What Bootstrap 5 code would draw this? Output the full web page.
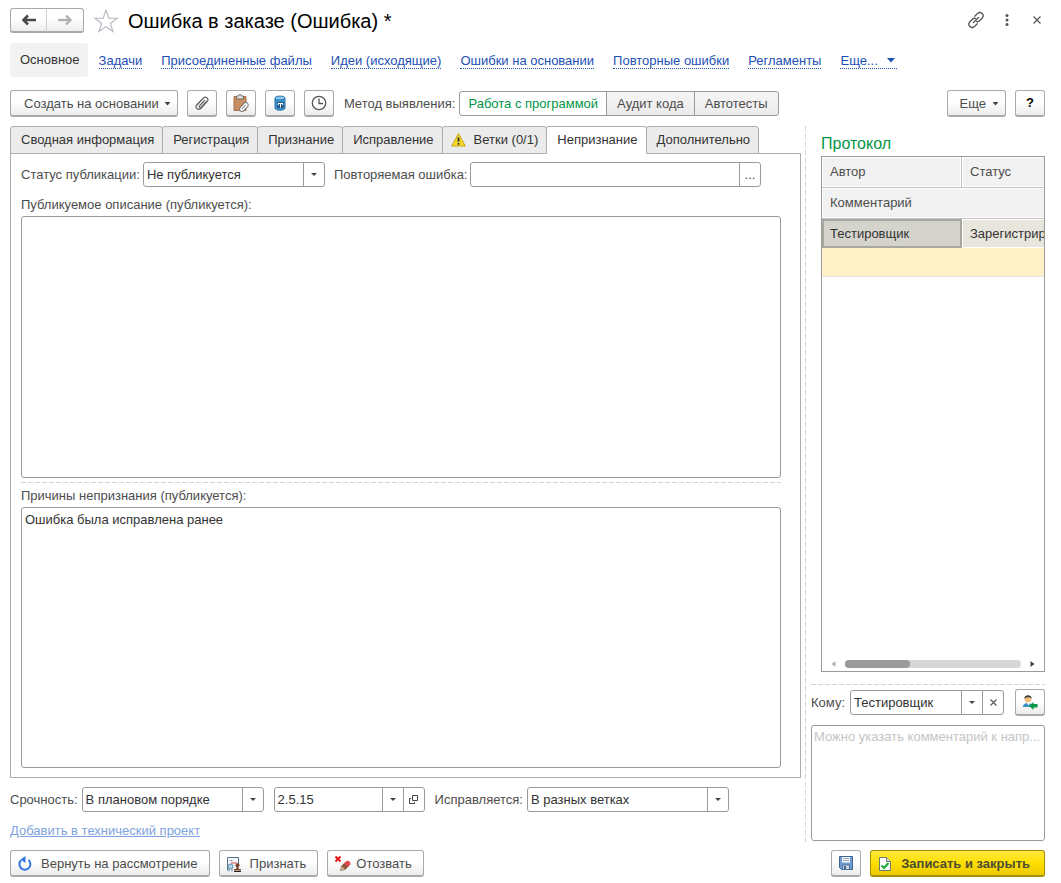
<!DOCTYPE html>
<html lang="ru">
<head>
<meta charset="utf-8">
<meta name="viewport" content="width=device-width, initial-scale=1">
<title>Ошибка в заказе (Ошибка) *</title>
<link href="https://cdn.jsdelivr.net/npm/bootstrap@5.3.0/dist/css/bootstrap.min.css" rel="stylesheet">
<style>
  body { font-family: "Liberation Sans", Arial, sans-serif; font-size: 13px; line-height: 16px; color: #4d4d4d; background: #fff; }
  .page { padding: 8px 16px 6px 10px; }
  svg { display: block; flex: none; }

  /* buttons */
  .btn-app { --bs-btn-font-size: 13px; --bs-btn-line-height: 16px; --bs-btn-color: #4d4d4d; --bs-btn-border-color: #a9a9a9;
    --bs-btn-border-radius: 3px; --bs-btn-hover-color: #333; --bs-btn-hover-border-color: #888;
    height: 27px; padding: 1px 6px 0; display: inline-flex; align-items: center; justify-content: center; white-space: nowrap;
    background: linear-gradient(#fff 45%, #ececec); border-bottom: 2px solid #a9a9a9; }
  .btn-square { width: 30px; padding: 0; }
  .btn-main { --bs-btn-color: #4d4d33; --bs-btn-border-color: #a58e00; background: linear-gradient(#ffe940, #ffdf00 50%, #ecc900);
    border-bottom-color: #a58e00; font-weight: 700; padding-right: 14px; }
  .btn-nav { width: 37px; height: 25px; padding: 0; }
  .btn-nav + .btn-nav { width: 38px; border-left-color: #d0d0d0; }
  .bare { border: 0; background: none; padding: 0; display: inline-flex; align-items: center; justify-content: center; color: #555; }

  h1.title { font-size: 20px; line-height: 24px; color: #000; font-weight: 400; }
  .window-tools { gap: 16px; margin-bottom: 2px; }

  /* section links */
  .sections { height: 34px; margin-top: 10px; }
  .sections .current { background: #f2f2f2; border-radius: 3px; padding: 9px 8px 9px 10px; color: #333; margin-right: 11px; text-decoration: none; }
  .sections .go { color: #1d50b4; text-decoration: none; border-bottom: 1px dotted #1d50b4; line-height: 14px; margin-right: 19px; margin-top: 2px; white-space: nowrap; }

  /* toolbar */
  .toolbar { margin: 13px 0 9px; }
  .toolbar .tool { margin-left: 9px; }
  .toolbar .create { padding-left: 13px; gap: 5px; }
  .toolbar .more { padding-left: 12px; gap: 6px; }
  .toolbar .method { margin: 0 4px 0 10px; }
  .seg .btn-app { height: 25px; border: 1px solid #9a9a9a; background: linear-gradient(#f6f6f6, #ebebeb); padding: 0 10px; }
  .seg .btn-check:checked + .btn-app { background: #fff; color: #009646; border-color: #9a9a9a; padding: 0 8px; }

  /* tabs */
  .apptabs { border: 0; position: relative; z-index: 1; flex-wrap: nowrap; }
  .apptabs .nav-link { padding: 5px 8px 5px 10px; height: 28px; line-height: 16px; color: #333; background: #ebebeb; border: 1px solid #adadad;
    border-radius: 3px 3px 0 0; margin: 0 -1px -1px 0; white-space: nowrap; }
  .apptabs .nav-link.active { background: #fff; border-color: #adadad #adadad #fff; color: #333; }
  .tabpanel { border: 1px solid #adadad; padding: 8px 19px 9px 10px; }

  /* fields */
  .form-control, .form-select { font-size: 13px; line-height: 17px; color: #333; border: 1px solid #9a9a9a; border-radius: 3px; padding: 3px; }
  input.form-control, .form-select { height: 25px; min-height: 25px; }
  .form-select { background: #fff url("data:image/svg+xml,%3Csvg xmlns='http://www.w3.org/2000/svg' width='21' height='23'%3E%3Cpath d='M.5 0v23' stroke='%239a9a9a'/%3E%3Cpath d='M8 10h6l-3 3z' fill='%23444'/%3E%3C/svg%3E") no-repeat right 0 top 0 / 21px 23px; padding-right: 24px; }
  .input-group { flex-wrap: nowrap; }
  .input-group .side { width: 22px; height: 25px; padding: 0; border: 1px solid #9a9a9a; border-radius: 0 3px 3px 0; margin-left: -1px; background: #fff; color: #444;
    display: flex; align-items: center; justify-content: center; }
  .input-group .side:not(:last-child) { border-radius: 0; }
  textarea.form-control { resize: none; line-height: 16px; min-height: 60px; padding-top: 4px; }
  textarea.note { height: 116px; margin: 9px 0; padding: 3px 2px; white-space: pre; overflow: hidden; }
  textarea.note::placeholder { color: #c4c4c4; }
  .w-list { width: 182px; }
  .w-ver { width: 151px; }
  .w-branch { width: 202px; }
  .first-row { gap: 3px; }
  .low-row { gap: 4px; margin-top: 9px; }
  .to-row { gap: 5px; margin-top: 4px; }
  .apart { margin-left: 6px; }
  .repeat { margin-right: 20px; }
  .cap { margin: 10px 0 3px; }
  .cap2 { margin: 5px 0 3px; }
  .add-row { margin: 11px 0; }
  .add-link { color: #7da3e0; }

  /* dashed splitters */
  .split-h { height: 1px; background: repeating-linear-gradient(90deg, #d4d4d4 0 5px, transparent 5px 7px); }
  .split-v { width: 1px; background: repeating-linear-gradient(#d4d4d4 0 5px, transparent 5px 8px); }

  /* side pane */
  .side-pane { width: 234px; margin-left: 5px; }
  .side-pane h2 { font-size: 16px; line-height: 20px; color: #009646; font-weight: 400; margin: 8px 0 2px 10px; }
  .side-pane .split-h { margin-top: 12px; }
  .log { border: 1px solid #9a9a9a; overflow: hidden; margin-left: 10px; }
  .log table { border-collapse: separate; border-spacing: 0; table-layout: fixed; width: 590px; }
  .log .col-author { width: 140px; }
  .log th { height: 31px; background: #f2f2f2; font-weight: 400; padding: 0 8px; border-bottom: 1px solid #c4c4c4; box-shadow: inset 0 0 0 1px #fff; }
  .log th.first { border-right: 1px solid #c4c4c4; }
  .log td { height: 29px; padding: 0 8px; color: #333; background: #e8e6dc; box-shadow: inset 0 0 0 1px #fff; }
  .log td.sel { background: #d5d4cc; border: 2px solid #a8a7a0; padding: 0 6px; box-shadow: none; }
  .log td.msg { background: #fff2c8; border-bottom: 1px solid #e2e2e2; box-shadow: none; }
  .hbar { height: 15px; padding: 0 9px; gap: 9px; }
  .hbar .track { height: 8px; border-radius: 4px; background: #d6d6d6; }
  .hbar .thumb { width: 37%; height: 8px; border-radius: 4px; background: #9a9a9a; }

  /* footer */
  .actions { gap: 9px; }
  .actions .wide { padding-right: 11px; }
</style>
</head>
<body>
<div class="page d-flex flex-column min-vh-100">

  <header class="d-flex align-items-center">
    <div class="btn-group">
      <button class="btn btn-app btn-nav" type="button" aria-label="Назад"><svg width="16" height="12" viewBox="0 0 16 12"><path d="M15 6H3M7 1.500L2.500 6 7 10.500" fill="none" stroke="#4a4a4a" stroke-width="2.600"/></svg></button>
      <button class="btn btn-app btn-nav" type="button" aria-label="Вперед"><svg width="16" height="12" viewBox="0 0 16 12"><path d="M1 6h12M9 1.500L13.500 6 9 10.500" fill="none" stroke="#b0b0b0" stroke-width="2.400"/></svg></button>
    </div>
    <button class="bare mx-2" type="button" aria-label="В избранное"><svg width="28" height="24" viewBox="0 0 28 24"><path d="M14 1l2.800 8.300H25.200l-6.800 5.200 2.600 8L14 17.600l-7 4.900 2.600-8L2.800 9.300h8.400z" fill="#fff" stroke="#b3b8bf" stroke-width="1.100"/></svg></button>
    <h1 class="title m-0 flex-fill">Ошибка в заказе (Ошибка) *</h1>
    <div class="window-tools d-flex align-items-center">
      <button class="bare" type="button" aria-label="Ссылка"><svg width="18" height="18" viewBox="0 0 18 18"><g fill="none" stroke="#555" stroke-width="1.300" stroke-linecap="round"><path d="M7.800 5.200l2.700-2.700q2.400-2 4.600 0t.2 4.500l-2.700 2.800q-1.600 1.400-3.300.7"/><path d="M10.200 12.800l-2.700 2.700q-2.400 2-4.600 0t-.2-4.500l2.700-2.800q1.600-1.400 3.300-.7"/><path d="M6.500 11.500l5-5"/></g></svg></button>
      <button class="bare" type="button" aria-label="Меню"><svg width="12" height="14" viewBox="0 0 12 14"><g fill="#555"><circle cx="6" cy="2.500" r="1.500"/><circle cx="6" cy="7" r="1.500"/><circle cx="6" cy="11.500" r="1.500"/></g></svg></button>
      <button class="bare" type="button" aria-label="Закрыть"><svg width="16" height="14" viewBox="0 0 16 14"><path d="M4.500 3.500l7 7M11.500 3.500l-7 7" stroke="#555" stroke-width="1.200"/></svg></button>
    </div>
  </header>

  <nav class="sections d-flex align-items-center">
    <a class="current" href="#">Основное</a>
    <a class="go" href="#">Задачи</a>
    <a class="go" href="#">Присоединенные файлы</a>
    <a class="go" href="#">Идеи (исходящие)</a>
    <a class="go" href="#">Ошибки на основании</a>
    <a class="go" href="#">Повторные ошибки</a>
    <a class="go" href="#">Регламенты</a>
    <a class="go d-flex align-items-center gap-2" href="#">Еще... <svg width="11" height="5" viewBox="0 0 11 5"><path d="M1 0h8l-4 4.500z" fill="#1d50b4"/></svg></a>
  </nav>

  <div class="toolbar d-flex align-items-center">
    <button class="btn btn-app create" type="button">Создать на основании<svg width="7" height="4" viewBox="0 0 7 4"><path d="M.5 0h6l-3 3.500z" fill="#444"/></svg></button>
    <button class="btn btn-app btn-square tool" type="button" aria-label="Файлы"><svg width="16" height="16" viewBox="0 0 16 16"><g fill="none" stroke="#666" stroke-width="1.200" stroke-linecap="round"><path d="M3 10l6.500-7a2.500 2.500 0 0 1 3.700 3.400l-6.400 7a2.700 2.700 0 0 1-4-3.700L8.500 4"/><path d="M13 6.500l-6 6.500M10.500 5.500l-5 5.500a1 1 0 0 0 1.600 1.300L12 7"/></g></svg></button>
    <button class="btn btn-app btn-square tool" type="button" aria-label="Вставить"><svg width="18" height="18" viewBox="0 0 18 18"><path d="M2 2.500h12v14H2z" fill="#c78e62" stroke="#a87048"/><path d="M4.500 3.500V2h2a1.500 1.500 0 0 1 3 0h2v3h-7z" fill="#ddd" stroke="#6c6258" stroke-width=".9"/><g fill="#fff" stroke="#777" stroke-width="1.100"><path d="M8.200 13.500l3.700-4.100a2.400 2.400 0 0 1 3.700 3.200L11.900 16.600a2.200 2.200 0 0 1-3.700-3.100z"/><path d="M10 15l3.500-4"/></g></svg></button>
    <button class="btn btn-app btn-square tool" type="button" aria-label="База"><svg width="14" height="16" viewBox="0 0 14 16"><path d="M2 3v10c0 3 10 3 10 0V3z" fill="#3d91cb" stroke="#2877b0"/><ellipse cx="7" cy="3" rx="5" ry="2" fill="#8cc8ee" stroke="#2877b0"/><rect x="4" y="7" width="7" height="6" rx="1" fill="#275780"/><path d="M5 8.500h5M7.500 8.500v4M5.200 8.500v1.700M9.800 8.500v1.700" stroke="#fff" stroke-width="1"/></svg></button>
    <button class="btn btn-app btn-square tool" type="button" aria-label="История"><svg width="16" height="16" viewBox="0 0 16 16"><circle cx="8" cy="8" r="6.700" fill="#fff" stroke="#555" stroke-width="1.300"/><path d="M8 3.500V8.500h4" fill="none" stroke="#555" stroke-width="1.300"/></svg></button>
    <span class="method">Метод выявления:</span>
    <div class="btn-group seg" role="group" aria-label="Метод выявления">
      <input class="btn-check" type="radio" name="method" id="m1" checked><label class="btn btn-app" for="m1">Работа с программой</label>
      <input class="btn-check" type="radio" name="method" id="m2"><label class="btn btn-app" for="m2">Аудит кода</label>
      <input class="btn-check" type="radio" name="method" id="m3"><label class="btn btn-app" for="m3">Автотесты</label>
    </div>
    <button class="btn btn-app more ms-auto" type="button">Еще<svg width="7" height="4" viewBox="0 0 7 4"><path d="M.5 0h6l-3 3.500z" fill="#444"/></svg></button>
    <button class="btn btn-app btn-square tool fw-bold text-black" type="button">?</button>
  </div>

  <div class="d-flex flex-fill">
    <main class="d-flex flex-column flex-fill">
      <ul class="nav nav-tabs apptabs">
        <li class="nav-item"><a class="nav-link" href="#">Сводная информация</a></li>
        <li class="nav-item"><a class="nav-link" href="#">Регистрация</a></li>
        <li class="nav-item"><a class="nav-link" href="#">Признание</a></li>
        <li class="nav-item"><a class="nav-link" href="#">Исправление</a></li>
        <li class="nav-item"><a class="nav-link d-flex ps-2" href="#"><svg class="me-2" width="15" height="15" viewBox="0 0 15 15"><path d="M7.500 1.500L14.300 14H.7z" fill="#f5d829" stroke="#c7a617" stroke-linejoin="round"/><path d="M7.500 5.500v4.300M7.500 11v1.700" stroke="#333" stroke-width="1.800"/></svg>Ветки (0/1)</a></li>
        <li class="nav-item"><a class="nav-link active" href="#">Непризнание</a></li>
        <li class="nav-item"><a class="nav-link" href="#">Дополнительно</a></li>
      </ul>
      <section class="tabpanel d-flex flex-column flex-fill">
        <div class="first-row d-flex align-items-center">
          <label for="status">Статус публикации:</label>
          <select class="form-select w-list" id="status"><option>Не публикуется</option></select>
          <label class="apart" for="repeat">Повторяемая ошибка:</label>
          <div class="input-group flex-fill w-auto repeat"><input class="form-control" id="repeat" type="text"><button class="side" type="button" aria-label="Выбрать">...</button></div>
        </div>
        <label class="cap" for="descr">Публикуемое описание (публикуется):</label>
        <textarea class="form-control flex-fill" id="descr"></textarea>
        <div class="split-h mt-1"></div>
        <label class="cap2" for="reason">Причины непризнания (публикуется):</label>
        <textarea class="form-control flex-fill" id="reason">Ошибка была исправлена ранее</textarea>
      </section>
      <div class="low-row d-flex align-items-center">
        <label for="urg">Срочность:</label>
        <select class="form-select w-list" id="urg"><option>В плановом порядке</option></select>
        <div class="input-group w-ver apart"><input class="form-control" type="text" value="2.5.15" aria-label="Версия"><button class="side" type="button" aria-label="Список"><svg width="6" height="3" viewBox="0 0 6 3"><path d="M0 0h6L3 3z" fill="#444"/></svg></button><button class="side" type="button" aria-label="Открыть"><svg width="11" height="11" viewBox="0 0 11 11"><g fill="none" stroke="#444"><path d="M4.500 1.500h5v5h-5z"/><path d="M3 4.500H1.500v5h5V8"/></g></svg></button></div>
        <label class="apart" for="fix">Исправляется:</label>
        <select class="form-select w-branch" id="fix"><option>В разных ветках</option></select>
      </div>
      <div class="add-row"><a class="add-link" href="#">Добавить в технический проект</a></div>
    </main>

    <div class="split-v ms-1 mb-2"></div>

    <aside class="side-pane d-flex flex-column flex-shrink-0">
      <h2>Протокол</h2>
      <div class="log d-flex flex-column flex-fill">
        <table>
          <colgroup><col class="col-author"><col></colgroup>
          <thead>
            <tr><th class="first" scope="col">Автор</th><th scope="col">Статус</th></tr>
            <tr><th colspan="2" scope="col">Комментарий</th></tr>
          </thead>
          <tbody>
            <tr><td class="sel">Тестировщик</td><td>Зарегистрирована</td></tr>
            <tr><td class="msg" colspan="2"></td></tr>
          </tbody>
        </table>
        <div class="hbar d-flex align-items-center mt-auto">
          <svg width="5" height="6" viewBox="0 0 5 6"><path d="M4.500 0v6L.5 3z" fill="#b5b5b5"/></svg>
          <div class="track flex-fill"><div class="thumb"></div></div>
          <svg width="5" height="6" viewBox="0 0 5 6"><path d="M.5 0v6l4-3z" fill="#444"/></svg>
        </div>
      </div>
      <div class="split-h"></div>
      <div class="to-row d-flex align-items-center">
        <label for="to">Кому:</label>
        <div class="input-group flex-fill w-auto"><select class="form-select" id="to"><option>Тестировщик</option></select><button class="side" type="button" aria-label="Очистить"><svg width="7" height="7" viewBox="0 0 7 7"><path d="M.5.5l6 6M6.500.5l-6 6" stroke="#555" stroke-width="1.100"/></svg></button></div>
        <button class="btn btn-app btn-square apart" type="button" aria-label="Направить"><svg width="16" height="16" viewBox="0 0 16 16"><path d="M1 13c0-3 2-4 5-4s4 1 5 4z" fill="#3a8fc4"/><path d="M5 9l1.500 2.500L8 9z" fill="#fff"/><circle cx="6" cy="5" r="3.400" fill="#f3bd79"/><path d="M2.300 5C2 0 10 0 9.700 5 9 2.800 3.500 2.800 2.300 5z" fill="#3c3c3c"/><path d="M15.500 10v3.500H11.500V16l-4.500-4 4.500-4v2z" fill="#0a9647"/></svg></button>
      </div>
      <textarea class="form-control note" aria-label="Комментарий" placeholder="Можно указать комментарий к напр..."></textarea>
    </aside>
  </div>

  <footer class="actions d-flex align-items-center">
    <button class="btn btn-app wide" type="button"><svg class="me-2" width="16" height="16" viewBox="0 0 16 16"><path d="M4 4.300A5.500 5.500 0 1 0 11.500 4" fill="none" stroke="#2f74e0" stroke-width="2"/><path d="M8.500 0v7L3.500 3.500z" fill="#2f74e0"/></svg>Вернуть на рассмотрение</button>
    <button class="btn btn-app wide" type="button"><svg class="me-2" width="16" height="16" viewBox="0 0 16 16"><path d="M1.500 14.500V1.500h11v7" fill="#f4f8fa" stroke="#587484"/><path d="M4 4.500h2.500" stroke="#88a"/><path d="M5 7h6" stroke="#d44"/><circle cx="4.500" cy="10.500" r="2.500" fill="#b9d6e6" stroke="#5a8aa6"/><path d="M3 13v2.500M6 13v2.500" stroke="#5a8aa6"/><circle cx="11.500" cy="9.300" r="2" fill="#7d4226"/><path d="M10.800 10h1.400l.6 3h2.200v1.500H8V13h2.200z" fill="#7d4226"/><path d="M8 15.500h7" stroke="#222"/></svg>Признать</button>
    <button class="btn btn-app wide" type="button"><svg class="me-1" width="18" height="18" viewBox="0 0 18 18"><path d="M1.500 1.500l5 5M6.500 1.500l-5 5" stroke="#e8141c" stroke-width="2"/><path d="M6.500 15.800l1-5 4 3.600z" fill="#e5b07c" stroke="#666" stroke-width=".6"/><path d="M7.500 10.800l3-3 4 3.800-3 3z" fill="#8b5538"/><path d="M10 8.200l2.500-2.200q1.600-.8 3 .6t.8 2.900l-2.300 2.400z" fill="#e04848"/></svg>Отозвать</button>
    <button class="btn btn-app btn-square ms-auto" type="button" aria-label="Записать"><svg width="16" height="16" viewBox="0 0 16 16"><path d="M1.500 1.500h13v13h-11l-2-2z" fill="#6f9bd0" stroke="#3f6593"/><path d="M4 2h8v5.500H4z" fill="#f5f8fc"/><path d="M5 3.500h6M5 5.500h6" stroke="#9ab"/><path d="M4.500 10h7v4.500h-7z" fill="#d3d8df" stroke="#3f6593" stroke-width=".8"/><path d="M6 11h2v3H6z" fill="#3f6593"/></svg></button>
    <button class="btn btn-app btn-main" type="button"><svg class="me-2" width="16" height="16" viewBox="0 0 16 16"><path d="M2.500 1.500h7l4 4v9h-11z" fill="#fff" stroke="#6b7a6b"/><path d="M9.500 1.500v4h4" fill="#dde" stroke="#6b7a6b"/><path d="M4.500 9.500L7 12l4.500-5" fill="none" stroke="#1fa83c" stroke-width="2.200"/></svg>Записать и закрыть</button>
  </footer>
</div>
<script src="https://cdn.jsdelivr.net/npm/bootstrap@5.3.0/dist/js/bootstrap.bundle.min.js"></script>
</body>
</html>
